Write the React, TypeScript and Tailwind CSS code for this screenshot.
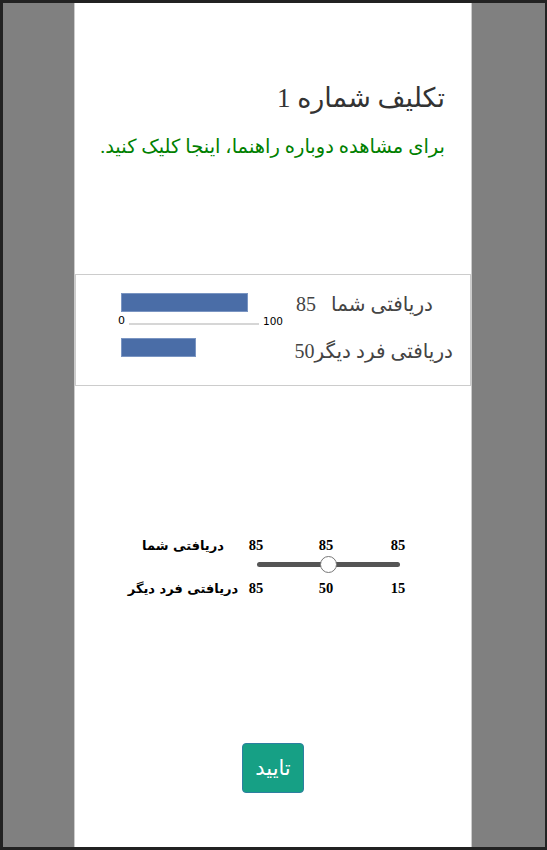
import React from "react";

export default function App() {
  const serif = { fontFamily: '"Liberation Serif", "DejaVu Sans", serif' };
  const sans = { fontFamily: '"DejaVu Sans", "Liberation Sans", sans-serif' };
  return (
    <div className="w-[547px] h-[850px] bg-[#222222] pt-[3px] pl-[3px] pr-[2px] pb-[3px]" style={serif}>
      <div className="w-full h-full bg-[#808080] flex">
        <div className="ml-[71px] w-[398px] h-full bg-white border-x border-[#cccccc] flex flex-col">
          <div className="pr-[26px] pt-[75px]" dir="rtl">
            <div className="text-[27px] leading-[40px] text-[#333333]">تکلیف شماره 1</div>
            <div className="mt-[14px] text-[19.5px] leading-[30px] text-[#008000]">برای مشاهده دوباره راهنما، اینجا کلیک کنید.</div>
          </div>

          <div className="mt-[112px] border border-[#cccccc] h-[112px] flex flex-col">
            <div className="mt-[18px] h-[19px] flex items-center">
              <div className="ml-[45px] w-[127px] h-[19px] bg-[#4a6da7] border border-[#7a95c2]" />
              <div className="flex-1 pr-[37px] text-right text-[20px] leading-[30px] text-[#444444] whitespace-nowrap mt-[3px]" dir="rtl">
                دریافتی شما &nbsp;&nbsp;85
              </div>
            </div>
            <div className="mt-[3px] h-[12px] flex items-center ml-[42px]" style={sans}>
              <span className="text-[11px] leading-[12px] text-black">0</span>
              <div className="ml-[4px] w-[130px] h-[2px] bg-[#d6d6d6] mt-[5px]" />
              <span className="ml-[4px] text-[10.5px] leading-[12px] text-black">100</span>
            </div>
            <div className="mt-[11px] h-[19px] flex items-center">
              <div className="ml-[45px] w-[75px] h-[19px] bg-[#4a6da7] border border-[#7a95c2]" />
              <div className="flex-1 pr-[17px] text-right text-[20px] leading-[30px] text-[#444444] whitespace-nowrap mt-[7px]" dir="rtl">
                دریافتی فرد دیگر50
              </div>
            </div>
          </div>

          <div className="mt-[150px] flex flex-col font-bold text-[14.5px] text-black">
            <div className="h-[20px] flex items-center">
              <div className="ml-[48px] w-[120px] flex justify-center whitespace-nowrap text-[13px]" style={sans} dir="rtl">دریافتی شما</div>
              <div className="ml-[-7px] w-[40px] text-center">85</div>
              <div className="ml-[30px] w-[40px] text-center">85</div>
              <div className="ml-[32px] w-[40px] text-center">85</div>
            </div>
            <div className="h-[17px] flex items-center ml-[182px]">
              <div className="relative w-[143px] h-[5px] rounded-full bg-[#555555]">
                <div className="absolute left-[63px] top-[-6px] w-[17px] h-[17px] rounded-full bg-white border border-[#777777]" />
              </div>
            </div>
            <div className="mt-[6px] h-[20px] flex items-center">
              <div className="ml-[48px] w-[120px] flex justify-center whitespace-nowrap text-[13px]" style={sans} dir="rtl">دریافتی فرد دیگر</div>
              <div className="ml-[-7px] w-[40px] text-center">85</div>
              <div className="ml-[30px] w-[40px] text-center">50</div>
              <div className="ml-[32px] w-[40px] text-center">15</div>
            </div>
          </div>

          <div className="mt-[144px] flex justify-center">
            <button className="w-[62px] h-[50px] rounded-[4px] bg-[#16a085] border border-[#2d7fa0] text-white text-[21px] leading-none" dir="rtl">
              تایید
            </button>
          </div>

          <div className="flex-1" />
        </div>
      </div>
    </div>
  );
}
